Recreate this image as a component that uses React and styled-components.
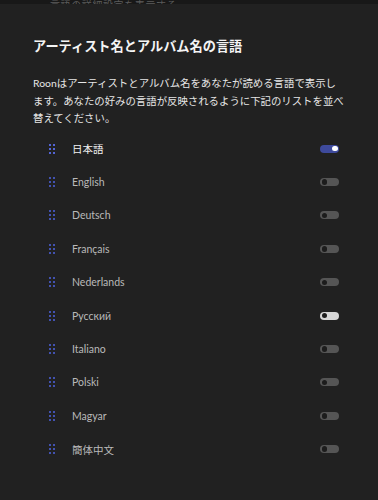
import React from 'react'
import styled, { createGlobalStyle } from 'styled-components'

const Global = createGlobalStyle`
  html, body {
    margin: 0;
    padding: 0;
    background: #212121;
  }
  body {
    font-family: Lato, "Noto Sans CJK JP", sans-serif;
  }
`

const languages = [
    { name: '日本語', state: 'on', primary: true },
    { name: 'English', state: 'off' },
    { name: 'Deutsch', state: 'off' },
    { name: 'Français', state: 'off' },
    { name: 'Nederlands', state: 'off' },
    { name: 'Русский', state: 'light' },
    { name: 'Italiano', state: 'off' },
    { name: 'Polski', state: 'off' },
    { name: 'Magyar', state: 'off' },
    { name: '簡体中文', state: 'off' },
]

const DragHandle = ({ bright }) => (
    <Handle $bright={bright}>
        {Array.from({ length: 6 }).map((_, i) => <span key={i} />)}
    </Handle>
)

const App = () => {
    return (
        <Page>
            <Global />
            <Strip>
                <StripText>言語の詳細設定を表示する</StripText>
            </Strip>
            <Content>
                <Title>アーティスト名とアルバム名の言語</Title>
                <Description>
                    Roonはアーティストとアルバム名をあなたが読める言語で表示し<br />
                    ます。あなたの好みの言語が反映されるように下記のリストを並べ<br />
                    替えてください。
                </Description>
                <List>
                    {languages.map(({ name, state, primary }) => (
                        <Row key={name}>
                            <DragHandle bright={primary} />
                            <Label $primary={primary}>{name}</Label>
                            <Toggle $state={state}>
                                <Knob $state={state} />
                            </Toggle>
                        </Row>
                    ))}
                </List>
            </Content>
        </Page>
    )
}

const Page = styled.div`
    width: 378px;
    height: 500px;
    overflow: hidden;
    background: #212121;
`

const Strip = styled.div`
    height: 4px;
    background: #181818;
    overflow: hidden;
    display: flex;
    align-items: flex-end;
    padding-left: 50px;
`

const StripText = styled.div`
    font-size: 10px;
    line-height: 10px;
    color: #5c5c5c;
    letter-spacing: 0.6px;
    margin-bottom: -6px;
`

const Content = styled.div`
    padding: 33px 0 0 33px;
`

const Title = styled.h1`
    margin: 0;
    font-size: 13.2px;
    line-height: 18px;
    font-weight: 700;
    color: #f4f4f4;
`

const Description = styled.p`
    margin: 20px 0 0;
    font-size: 10.4px;
    line-height: 17.5px;
    color: #e6e6e6;
    white-space: nowrap;
`

const List = styled.div`
    margin-top: 4.5px;
    display: flex;
    flex-direction: column;
`

const Row = styled.div`
    height: 33.4px;
    display: flex;
    align-items: center;
    padding-left: 16px;
    padding-right: 39px;
`

const Handle = styled.div`
    display: grid;
    grid-template-columns: repeat(2, 2px);
    grid-auto-rows: 2px;
    gap: 2px;
    width: 6px;
    span {
        background: ${p => (p.$bright ? '#5364d4' : '#4252b0')};
    }
`

const Label = styled.span`
    margin-left: 17px;
    flex: 1;
    font-size: 10.5px;
    color: ${p => (p.$primary ? '#f2f2f2' : '#b9b9b9')};
`

const trackColors = {
    on: '#3e4a9c',
    off: '#555555',
    light: '#d6d6d6',
}

const Toggle = styled.div`
    width: 19px;
    height: 8px;
    border-radius: 4px;
    background: ${p => trackColors[p.$state]};
    display: flex;
    align-items: center;
    justify-content: ${p => (p.$state === 'on' ? 'flex-end' : 'flex-start')};
    padding: 0 1.5px;
    box-sizing: border-box;
`

const Knob = styled.div`
    width: 5.5px;
    height: 5.5px;
    border-radius: 50%;
    background: ${p => (p.$state === 'on' ? '#ffffff' : '#1c1c1c')};
`

export default App
